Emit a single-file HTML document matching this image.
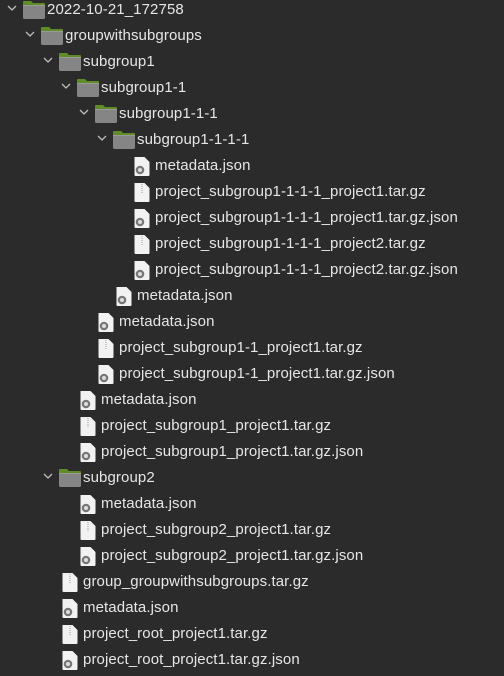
<!DOCTYPE html>
<html><head><style>
body{margin:0;width:504px;height:676px;background:#2b2b2b;overflow:hidden;font-family:"Liberation Sans",sans-serif;}
.r{position:absolute;height:26px;left:0;right:0;}
.t{position:absolute;top:4px;font-size:15px;letter-spacing:0.1px;color:#e6e6e6;white-space:nowrap;line-height:18px;}
.c{position:absolute;top:5px;}
.i{position:absolute;}
</style></head><body>
<div id="tree"></div>
<script>
var rows=[
[0,'f','2022-10-21_172758'],
[1,'f','groupwithsubgroups'],
[2,'f','subgroup1'],
[3,'f','subgroup1-1'],
[4,'f','subgroup1-1-1'],
[5,'f','subgroup1-1-1-1'],
[6,'j','metadata.json'],
[6,'z','project_subgroup1-1-1-1_project1.tar.gz'],
[6,'j','project_subgroup1-1-1-1_project1.tar.gz.json'],
[6,'z','project_subgroup1-1-1-1_project2.tar.gz'],
[6,'j','project_subgroup1-1-1-1_project2.tar.gz.json'],
[5,'j','metadata.json'],
[4,'j','metadata.json'],
[4,'z','project_subgroup1-1_project1.tar.gz'],
[4,'j','project_subgroup1-1_project1.tar.gz.json'],
[3,'j','metadata.json'],
[3,'z','project_subgroup1_project1.tar.gz'],
[3,'j','project_subgroup1_project1.tar.gz.json'],
[2,'f','subgroup2'],
[3,'j','metadata.json'],
[3,'z','project_subgroup2_project1.tar.gz'],
[3,'j','project_subgroup2_project1.tar.gz.json'],
[2,'z','group_groupwithsubgroups.tar.gz'],
[2,'j','metadata.json'],
[2,'z','project_root_project1.tar.gz'],
[2,'j','project_root_project1.tar.gz.json']];
var h='';
rows.forEach(function(r,k){
var L=r[0],y=-3+k*26,s='<div class="r" style="top:'+y+'px">';
if(r[1]=='f'){
 s+='<svg class="c" style="left:'+(6+18*L)+'px" width="12" height="12"><path d="M2 4 L6 8 L10 4" stroke="#bdbdbd" stroke-width="1.3" fill="none"/></svg>';
 s+='<svg class="i" style="left:'+(22+18*L)+'px;top:3px" width="24" height="20"><path d="M1 2 Q1 1 2 1 H9 L11 3 H22 Q23 3 23 4 V8 H1Z" fill="#5f8c27"/><rect x="1" y="5" width="22" height="14" rx="1.5" fill="#858585"/><rect x="1" y="5" width="22" height="1" fill="#9a9a9a"/></svg>';
}else{
 s+='<svg class="i" style="left:'+(25+18*L)+'px;top:3px" width="18" height="21"><path d="M1.5 1 H11.5 L16.5 6 V19 Q16.5 20 15.5 20 H2.5 Q1.5 20 1.5 19Z" fill="#f2f2f2"/>'+
 (r[1]=='j'?'<circle cx="7" cy="14" r="4.3" fill="#777"/><circle cx="7" cy="14" r="2" fill="#ddd"/>':'<path d="M9 2 V12" stroke="#999" stroke-width="1" stroke-dasharray="1,1"/>')+'</svg>';
}
s+='<div class="t" style="left:'+(47+18*L)+'px">'+r[2]+'</div></div>';
h+=s;});
document.getElementById('tree').innerHTML=h;
</script>
</body></html>
